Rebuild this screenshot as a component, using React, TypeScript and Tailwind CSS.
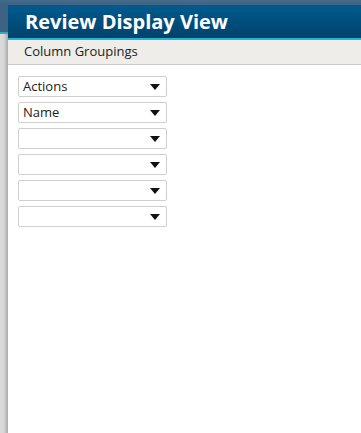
const rows = ["Actions", "Name", "", "", "", ""];

const Caret = () => (
  <svg width="10" height="6" viewBox="0 0 10 6" className="shrink-0">
    <path d="M0 0 H10 L5 6 Z" fill="#111" />
  </svg>
);

const App = () => {
  return (
    <div className="flex h-[433px] w-[361px] flex-col overflow-hidden bg-[#3d6283] font-['Open_Sans',sans-serif]">
      <div className="h-[5px] shrink-0 bg-gradient-to-b from-[#456b8b] to-[#3d6283]" />
      <div className="flex flex-1">
        <div className="flex w-[8px] shrink-0 flex-col">
          <div className="h-[27px] bg-[#3d6283]" />
          <div className="h-[2px] bg-[#3aa6bd]" />
          <div className="flex-1 bg-gradient-to-r from-[#dcdcdc] via-[#d6d6d6] to-[#a9a9a9]" />
        </div>
        <div className="flex flex-1 flex-col bg-white">
          <div className="flex h-[35px] items-center border-b-2 border-[#22b6d3] bg-gradient-to-b from-[#005b8f] to-[#00426d] pl-[17px]">
            <h1 className="text-[20px] font-bold leading-none text-white">Review Display View</h1>
          </div>
          <div className="flex h-[25px] items-center border-b border-[#c8c8c8] bg-[#eeede9] pl-[16px] text-[13px] text-[#222]">
            Column Groupings
          </div>
          <div className="flex flex-col gap-[5px] pl-[10px] pt-[11px]">
            {rows.map((label, i) => (
              <div
                key={i}
                className="flex h-[21px] w-[149px] items-center justify-between rounded-[2px] border border-[#cfcfcf] bg-white pl-[4px] pr-[6px] text-[13px] text-[#222]"
              >
                <span>{label}</span>
                <Caret />
              </div>
            ))}
          </div>
        </div>
      </div>
    </div>
  );
};

export default App;
